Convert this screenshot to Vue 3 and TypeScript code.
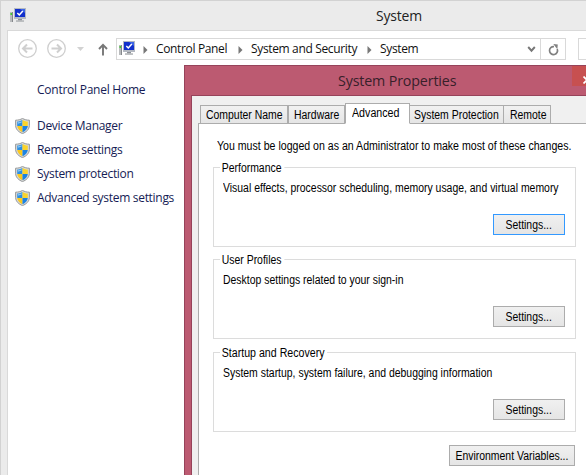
<script setup lang="ts">
interface Group {
  title: string
  text: string
  cls: string
  focused?: boolean
}

const links: { label: string; cls: string }[] = [
  { label: 'Device Manager', cls: 'l1' },
  { label: 'Remote settings', cls: 'l2' },
  { label: 'System protection', cls: 'l3' },
  { label: 'Advanced system settings', cls: 'l4' },
]

const crumbs: string[] = ['Control Panel', 'System and Security', 'System']

const tabs: { label: string; cls: string }[] = [
  { label: 'Computer Name', cls: 't1' },
  { label: 'Hardware', cls: 't2' },
  { label: 'Advanced', cls: 't3 active' },
  { label: 'System Protection', cls: 't4' },
  { label: 'Remote', cls: 't5' },
]

const groups: Group[] = [
  {
    title: 'Performance',
    text: 'Visual effects, processor scheduling, memory usage, and virtual memory',
    cls: 'g1',
    focused: true,
  },
  { title: 'User Profiles', text: 'Desktop settings related to your sign-in', cls: 'g2' },
  {
    title: 'Startup and Recovery',
    text: 'System startup, system failure, and debugging information',
    cls: 'g3',
  },
]
</script>

<template>
  <div class="window">
    <svg width="0" height="0" class="defs">
      <symbol id="pc" viewBox="0 0 17 15">
        <rect x="0" y="4" width="3" height="10" fill="#b9bbbd" />
        <rect x="2" y="4" width="1" height="10" fill="#85888c" />
        <rect x="0.500" y="5" width="1.500" height="2" fill="#3fd02c" />
        <rect x="4" y="0" width="12" height="11" fill="#b4b9c2" />
        <rect x="5" y="1" width="10" height="8" fill="#1230cc" />
        <path d="M10 1h5v4z" fill="#3d66e6" />
        <path d="M7.300 5l2 2 3.500-4" fill="none" stroke="#fff" stroke-width="1.500" />
        <rect x="8" y="11" width="4" height="1.500" fill="#8c9096" />
        <rect x="6" y="12.300" width="8" height="1.500" fill="#b0b3b6" />
      </symbol>
      <symbol id="shield" viewBox="0 0 15 16">
        <path d="M7.500 .4C5.500 1.600 3.200 2.200 .6 2.200V7.500C.8 11.500 3.500 14 7.500 15.600C11.500 14 14.200 11.500 14.400 7.500V2.200C11.800 2.200 9.500 1.600 7.500 .4Z" fill="#d8dadb" stroke="#8d9091" stroke-width=".9" />
        <path d="M7.500 1.900C6 2.800 4.300 3.400 2.200 3.500V8H7.500Z" fill="#2d8fe2" />
        <path d="M7.500 1.900C9 2.800 10.700 3.400 12.800 3.500V8H7.500Z" fill="#fbd42c" />
        <path d="M2.200 8C2.600 11 4.700 13 7.500 14.200V8Z" fill="#fbc91c" />
        <path d="M12.800 8C12.400 11 10.300 13 7.500 14.200V8Z" fill="#1c83e3" />
        <path d="M2.800 4.200Q5 4 6.700 3.200V4.400L2.900 5.800Z" fill="#8cc8f4" />
      </symbol>
    </svg>

    <header class="titlebar">
      <svg class="pc" width="17" height="15"><use href="#pc" /></svg>
      <h1>System</h1>
    </header>

    <div class="client">
      <nav class="toolbar">
        <svg class="navbtn" width="19" height="19" viewBox="0 0 19 19">
          <circle cx="9.500" cy="9.500" r="8.800" />
          <path d="M14.500 9.500H5.500M9 5.500L5 9.500l4 4" />
        </svg>
        <svg class="navbtn" width="19" height="19" viewBox="0 0 19 19">
          <circle cx="9.500" cy="9.500" r="8.800" />
          <path d="M4.500 9.500h9M10 5.500l4 4-4 4" />
        </svg>
        <svg class="drop" width="7" height="4"><path d="M0 0h7L3.500 4z" fill="#d2d2d2" /></svg>
        <svg class="up" width="10" height="13" viewBox="0 0 10 13">
          <path d="M5 12.500V2M1 6l4-4.200L9 6" fill="none" stroke="#777" stroke-width="1.900" />
        </svg>
        <div class="address">
          <svg class="pc" width="17" height="15"><use href="#pc" /></svg>
          <span v-for="(c, i) in crumbs" :key="c" class="crumb" :class="'c' + (i + 1)">
            <svg width="5" height="8"><path d="M.5 0L4.500 4 .5 8z" fill="#777" /></svg>
            <span>{{ c }}</span>
          </span>
          <svg class="chev" width="9" height="7" viewBox="0 0 9 7">
            <path d="M1.200 1l3.300 3.700L7.800 1" fill="none" stroke="#777" stroke-width="1.900" />
          </svg>
          <div class="refresh">
            <svg width="12" height="12" viewBox="0 0 12 12">
              <path d="M6 2.600A4 4 0 1 0 9.200 5" fill="none" stroke="#808080" stroke-width="1.700" />
              <path d="M5.300 0L9.800 .6 9.300 5.200z" fill="#808080" />
            </svg>
          </div>
        </div>
        <div class="search"></div>
      </nav>

      <aside class="side">
        <a class="home">Control Panel Home</a>
        <a v-for="l in links" :key="l.label" class="link" :class="l.cls">
          <svg width="15" height="16"><use href="#shield" /></svg>
          <span>{{ l.label }}</span>
        </a>
      </aside>
    </div>

    <section class="dialog">
      <header class="dlg-title">
        <h2>System Properties</h2>
        <button class="close">
          <svg width="8" height="8"><path d="M.5 .5l7 7M7.500 .5l-7 7" stroke="#fff" stroke-width="1.700" /></svg>
        </button>
      </header>
      <div class="dlg-body">
        <div class="tabs">
          <div v-for="t in tabs" :key="t.label" class="tab" :class="t.cls"><span class="narrow">{{ t.label }}</span></div>
        </div>
        <div class="panel">
          <p class="notice narrow">You must be logged on as an Administrator to make most of these changes.</p>
          <div v-for="g in groups" :key="g.title" class="group" :class="g.cls">
            <span class="legend narrow">{{ g.title }}</span>
            <p class="narrow">{{ g.text }}</p>
            <button class="btn" :class="{ focused: g.focused }"><span>Settings...</span></button>
          </div>
          <button class="btn env"><span>Environment Variables...</span></button>
        </div>
      </div>
    </section>
  </div>
</template>

<style>
body { overflow: hidden; }
</style>

<style scoped>
* { box-sizing: border-box; }
h1, h2, p { margin: 0; font-weight: 400; }
svg { display: block; flex: none; }
.defs { position: absolute; }
.window {
  position: relative; width: 586px; height: 475px; overflow: hidden;
  background: #ebebeb; border-left: 1px solid #d2d2d2; border-top: 1px solid #d2d2d2;
  font-family: "Open Sans", "Noto Sans", sans-serif; font-size: 12px; color: #111;
  white-space: nowrap;
}
.titlebar { height: 29px; display: flex; align-items: flex-start; padding-left: 9px; }
.titlebar .pc { margin-top: 7px; }
h1 { margin: 5px 0 0 349px; font-size: 15px; line-height: 19px; color: #222; transform: scaleX(0.93); transform-origin: 0 0; letter-spacing: -0.2px; }
.client { margin-left: 6px; height: 446px; background: #fff; border-left: 1px solid #d9d9d9; border-top: 1px solid #d9d9d9; }
.toolbar { display: flex; align-items: flex-start; padding-top: 7px; height: 34px; padding-left: 10px; }
.toolbar > * { flex: none; }
.navbtn { margin: 1px 10px 0 0; fill: none; stroke: #cfcfcf; stroke-width: 1.3; }
.navbtn path { stroke-width: 2; }
.drop { margin: 9px 0 0 1px; }
.up { margin: 5px 9px 0 14px; }
.address { width: 450px; height: 22px; border: 1px solid #d9d9d9; display: flex; align-items: center; margin-left: -1px; padding-left: 2px; }
.address .pc { margin-top: -1px; }
.crumb { display: flex; align-items: center; gap: 8px; height: 20px; line-height: 20px; letter-spacing: -0.35px; }
.crumb svg { margin-top: 1px; }
.c1 { width: 95px; margin-left: 7px; }
.c2 { width: 129px; }
.chev { margin-left: auto; margin-right: 4px; }
.refresh { width: 25px; height: 20px; border-left: 1px solid #d9d9d9; padding: 5px 0 0 7px; }
.search { margin-left: 12px; width: 20px; height: 22px; border: 1px solid #d9d9d9; }
.side { padding: 16px 0 0 6px; color: #151c55; letter-spacing: -0.3px; }
.home { display: block; margin-left: 23px; height: 33px; line-height: 18px; letter-spacing: -0.25px; }
.link { display: flex; align-items: center; gap: 7px; height: 24px; line-height: 20px; padding-left: 1px; }
.l1, .l2 { letter-spacing: -0.32px; }

.dialog {
  position: absolute; left: 183px; top: 64px; width: 440px; height: 420px;
  background: #bc5a71; border: 1px solid #96435a; padding-left: 6px;
}
.dlg-title { height: 29px; display: flex; align-items: flex-start; padding-left: 147px; }
h2 { width: 234px; flex: none; font-size: 15px; line-height: 29px; color: #37202a; transform: scaleX(0.95); transform-origin: 0 0; letter-spacing: -0.15px; }
.close { border: 0; background: #c75050; width: 43px; height: 20px; padding: 7px 0 0 11px; flex: none; }
.dlg-body {
  height: 390px; border: 1px solid #96435a; background: #f0f0f0; padding: 7px 0 0 6px;
  font-family: "Liberation Sans", Arial, sans-serif; color: #000;
}
.narrow { display: inline-block; transform: scaleX(0.87); transform-origin: 0 0; }
.tabs { display: flex; align-items: flex-end; height: 21px; padding-left: 2px; }
.tab {
  height: 19px; border: 1px solid #acacac;
  background: linear-gradient(#f1f1f1, #e5e5e5); line-height: 18px; padding-left: 5px;
}
.t1 { width: 88px; }
.t2 { width: 57px; }
.t3 { width: 65px; }
.t4 { width: 95px; margin-left: -1px; padding-left: 4px; }
.t5 { width: 48px; margin-left: -1px; padding-left: 6px; }
.active { height: 21px; background: #fff; border-bottom-color: #fff; padding-left: 6px; line-height: 18px; position: relative; }
.t3 .narrow { transform: scaleX(0.89); }
.panel { margin-top: -1px; height: 360px; background: #fff; border: 1px solid #acacac; padding: 14px 0 0 14px; }
.notice { display: block; width: 420px; margin-left: 4px; line-height: 16px; height: 29px; transform: scaleX(0.882); }
.group { position: relative; width: 363px; height: 80px; border: 1px solid #dcdcdc; margin-bottom: 12px; padding: 12px 0 0 9px; line-height: 16px; }
.group p { display: block; width: 400px; }
.g2 { margin-bottom: 13px; }
.legend { position: absolute; left: 6px; top: -8px; background: #fff; padding: 0 3px 0 2px; }
.g3 .legend { transform: scaleX(0.885); }
.btn {
  display: block; font: 12px/18px "Liberation Sans", Arial, sans-serif; color: #000;
  border: 1px solid #acacac; background: linear-gradient(#f0f0f0, #e5e5e5);
  width: 72px; height: 21px; padding: 0; margin: 18px 0 0 270px;
}
.btn span { display: inline-block; transform: scaleX(0.87); }
.focused { border-color: #3399ff; }
.env { width: 126px; margin: 13px 0 0 236px; }
.env span { margin: 0 -10px; }
</style>
